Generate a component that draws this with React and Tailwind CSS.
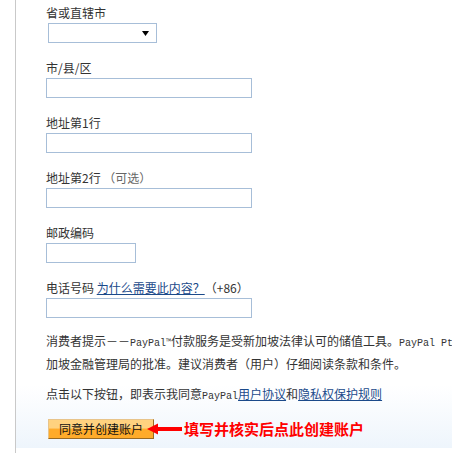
import React from "react";

const inputCls = "block h-[20px] border border-[#a7bed8] bg-white";

function Field({ label, children, first }) {
  return (
    <div className={first ? "" : "mt-[17px]"}>
      <div className="h-[16px] leading-[16px] mb-[2px] whitespace-nowrap">{label}</div>
      {children}
    </div>
  );
}

export default function App() {
  return (
    <div className="w-[475px] h-[453px] bg-white flex overflow-hidden font-['Noto_Sans_CJK_SC',sans-serif] text-[12px] text-[#333333]">
      <div className="w-[15px] shrink-0" />
      <div className="w-px shrink-0 bg-[#c9c9c9]" />
      <div className="w-[436px] shrink-0 overflow-hidden">
        <div className="h-[448px] pl-[30px] pt-[5px] bg-[linear-gradient(180deg,#ffffff_385px,#eef5fc)]">
          <Field label="省或直辖市" first>
            <div className="ml-[2px] w-[109px] h-[20px] border border-[#a7bed8] bg-white flex items-center justify-end pr-[7px]">
              <svg width="7" height="5" viewBox="0 0 7 5">
                <polygon points="0,0 7,0 3.5,5" fill="#000" />
              </svg>
            </div>
          </Field>
          <Field label="市/县/区">
            <div className={inputCls + " w-[206px]"} />
          </Field>
          <Field label="地址第1行">
            <div className={inputCls + " w-[206px]"} />
          </Field>
          <Field
            label={
              <>
                地址第2行 <span className="text-[#666666]">（可选）</span>
              </>
            }
          >
            <div className={inputCls + " w-[206px]"} />
          </Field>
          <Field label="邮政编码">
            <div className={inputCls + " w-[90px]"} />
          </Field>
          <Field
            label={
              <>
                电话号码 <a className="text-[#1b4a8a] underline">为什么需要此内容？</a>
                <span className="text-[#333333]">（+86）</span>
              </>
            }
          >
            <div className={inputCls + " w-[206px]"} />
          </Field>

          <div className="mt-[13px] leading-[20px] whitespace-nowrap">
            <div>
              消费者提示－－<span className="font-['Liberation_Mono',monospace] text-[10px]">PayPal</span>
              <span className="text-[7px] align-top">™</span>付款服务是受新加坡法律认可的储值工具。
              <span className="font-['Liberation_Mono',monospace] text-[10px]">PayPal Pt</span>
            </div>
            <div>加坡金融管理局的批准。建议消费者（用户）仔细阅读条款和条件。</div>
          </div>

          <div className="mt-[10px] leading-[20px] whitespace-nowrap">
            点击以下按钮，即表示我同意
            <span className="font-['Liberation_Mono',monospace] text-[10px]">PayPal</span>
            <a className="text-[#1b4a8a] underline">用户协议</a>和
            <a className="text-[#1b4a8a] underline">隐私权保护规则</a>
          </div>

          <div className="mt-[12px] flex items-center">
            <button className="ml-[2px] w-[106px] h-[20px] leading-[18px] text-[12px] text-[#111111] border border-t-[#e8c48a] border-l-[#e8c48a] border-r-[#9a6a22] border-b-[#9a6a22] bg-[linear-gradient(180deg,#ffd27f_0%,#ffd27f_45%,#ffab2a_50%,#ffab2a_100%)] font-['Noto_Sans_CJK_SC',sans-serif]">
              同意并创建账户
            </button>
            <svg width="35" height="12" viewBox="0 0 35 12" className="ml-[-7px] shrink-0">
              <polygon points="0,6 11,0.5 11,11.5" fill="#ff0000" />
              <rect x="10" y="4" width="25" height="4" fill="#ff0000" />
            </svg>
            <span className="ml-[2px] text-[15px] font-bold text-[#ff0000] leading-[20px] whitespace-nowrap">
              填写并核实后点此创建账户
            </span>
          </div>
        </div>
      </div>
    </div>
  );
}
